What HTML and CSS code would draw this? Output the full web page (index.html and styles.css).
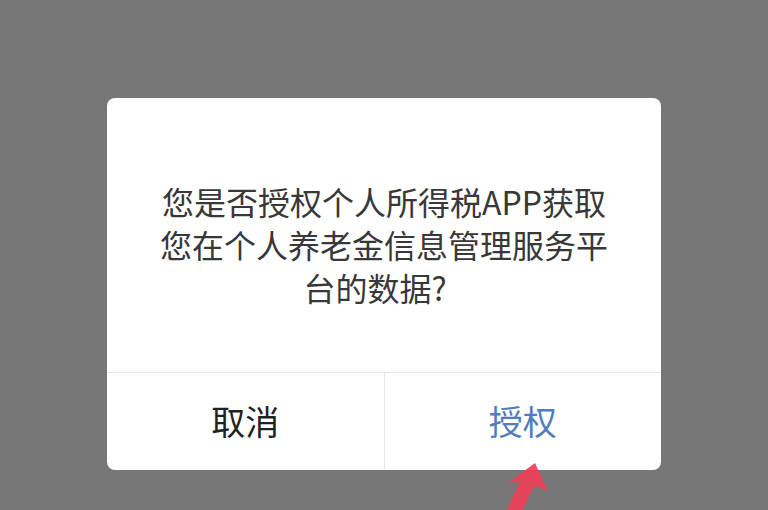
FILE: index.html
```html
<!DOCTYPE html>
<html lang="zh">
<head>
<meta charset="utf-8">
<link rel="stylesheet" href="styles.css">
</head>
<body>
<div class="screen">
  <div class="dialog">
    <div class="message">
      <p class="text">您是否授权个人所得税APP获取<br>您在个人养老金信息管理服务平<br><span class="tail">台的数据?</span></p>
    </div>
    <div class="actions">
      <div class="btn cancel">取消</div>
      <div class="btn confirm">授权</div>
    </div>
  </div>
  <svg class="arrow" width="60" height="60" viewBox="0 0 60 60">
    <polygon points="45,2 58,30 44,25 30,55 14,55 30,20 18,22" fill="#ec3f56" opacity="0.92"/>
  </svg>
</div>
</body>
</html>
```
FILE: styles.css
```css
html, body {
  margin: 0;
  padding: 0;
}
body {
  width: 768px;
  height: 510px;
  overflow: hidden;
  background: #777777;
  font-family: "Noto Sans CJK SC", "Noto Sans", sans-serif;
}
.screen {
  position: relative;
  width: 768px;
  height: 510px;
  display: flex;
  justify-content: center;
  padding-top: 98px;
  box-sizing: border-box;
}
.dialog {
  width: 554px;
  height: 372px;
  background: #ffffff;
  border-radius: 8px;
  display: flex;
  flex-direction: column;
  overflow: hidden;
}
.message {
  height: 275px;
  box-sizing: border-box;
  padding-top: 82px;
  border-bottom: 1px solid #e6e6e6;
  display: flex;
  flex-direction: column;
  align-items: center;
}
.text {
  margin: 0;
  font-size: 32px;
  line-height: 43px;
  color: #383838;
  white-space: nowrap;
  text-align: center;
}
.tail {
  padding-right: 18px;
}
.actions {
  flex: 1;
  display: flex;
}
.btn {
  flex: 1;
  display: flex;
  align-items: center;
  justify-content: center;
  font-size: 34px;
  padding-bottom: 2px;
}
.cancel {
  color: #222222;
  border-right: 1px solid #e6e6e6;
}
.confirm {
  color: #4f7dbd;
}
.arrow {
  position: absolute;
  left: 490px;
  top: 461px;
}
```
